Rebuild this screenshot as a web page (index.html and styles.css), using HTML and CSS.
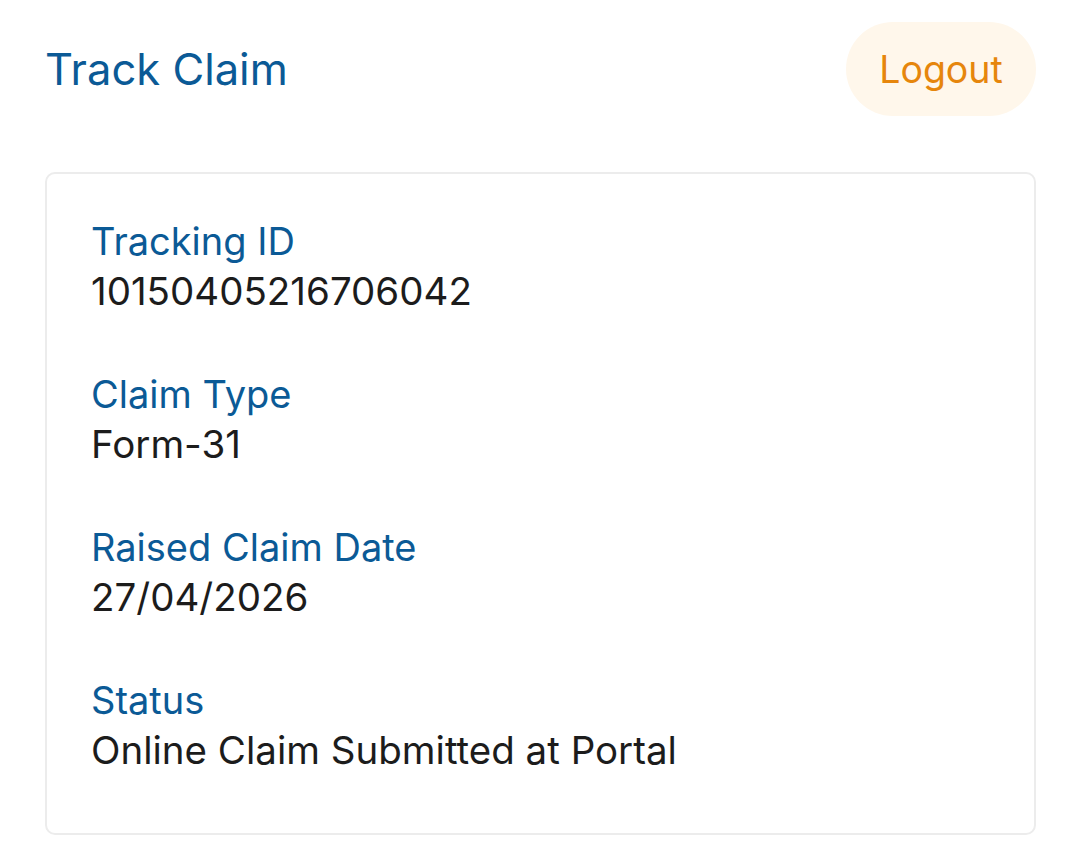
FILE: index.html
```html
<!DOCTYPE html>
<html lang="en">
	<head>
		<meta charset="UTF-8" />
		<meta name="viewport" content="width=device-width, initial-scale=1.0" />
		<title>Track Claim</title>
		<link rel="stylesheet" href="styles.css">
	</head>
	<body>
		<header class="top-bar">
			<h1 class="page-title">Track Claim</h1>
			<button class="logout-btn">Logout</button>
		</header>

		<section class="claim-card">
			<div class="field">
				<div class="field-label">Tracking ID</div>
				<div class="field-value">10150405216706042</div>
			</div>
			<div class="field">
				<div class="field-label">Claim Type</div>
				<div class="field-value">Form-31</div>
			</div>
			<div class="field">
				<div class="field-label">Raised Claim Date</div>
				<div class="field-value">27/04/2026</div>
			</div>
			<div class="field">
				<div class="field-label">Status</div>
				<div class="field-value">Online Claim Submitted at Portal</div>
			</div>
		</section>
	</body>
</html>
```

FILE: styles.css
```css
html,
body {
	width: 100%;
	height: 100%;
}

body {
	margin: 0;
	padding: 22px 44px 0 45px;
	box-sizing: border-box;
	background: #fff;
	color: #1c1c1c;
	font-family: Inter, 'Noto Sans', sans-serif;
}

.top-bar {
	display: flex;
	align-items: center;
	justify-content: space-between;
	height: 94px;
}

.page-title {
	margin: 0;
	font-size: 43.5px;
	font-weight: 400;
	color: #0b5a96;
}

.logout-btn {
	width: 190px;
	height: 94px;
	border: none;
	border-radius: 47px;
	background-color: #fff7eb;
	color: #e6860c;
	font-family: inherit;
	font-size: 37.5px;
}

.claim-card {
	margin-top: 56px;
	padding: 42px 44px 58px;
	border: 2px solid #ececec;
	border-radius: 10px;
	display: flex;
	flex-direction: column;
	gap: 53px;
}

.field-label {
	font-size: 38px;
	line-height: 50px;
	color: #0b5a96;
}

.field-value {
	font-size: 38.5px;
	line-height: 50px;
}
```
